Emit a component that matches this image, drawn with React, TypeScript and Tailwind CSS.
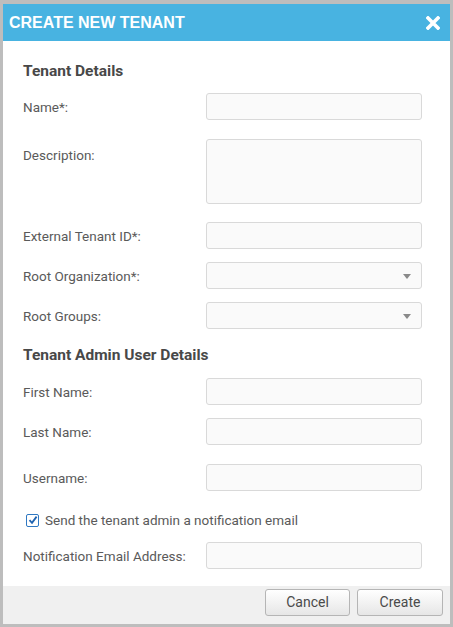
import React from 'react';

const font = { fontFamily: 'Roboto, "Liberation Sans", Arial, sans-serif' };

function Field({ label, className, tall, select }: { label: string; className: string; tall?: boolean; select?: boolean }) {
	return (
		<div className={`flex ${tall ? 'items-start' : 'items-center'} ${className}`}>
			<div className={`w-[183px] shrink-0 text-[13.5px] leading-[16px] text-[#5a5a5a] ${tall ? 'pt-[8px]' : ''}`}>{label}</div>
			<div
				className={`relative w-[216px] ${tall ? 'h-[65px]' : 'h-[27px]'} rounded-[3px] border border-[#d9d9d9] bg-[#fafafa]`}
			>
				{select && (
					<svg className="absolute right-[10px] top-[11px] w-[8px] h-[5px]" viewBox="0 0 8 5">
						<path d="M0 0h8L4 5z" fill="#8a8a8a" />
					</svg>
				)}
			</div>
		</div>
	);
}

export default function App() {
	return (
		<div className="w-[453px] h-[627px] bg-[#bdbdbd] pt-[4px] px-[3px] pb-[3px] flex flex-col" style={font}>
			{/* Header */}
			<div className="h-[37px] shrink-0 bg-[#48b3e1] flex items-center justify-between pl-[6px] pr-[10px]">
				<span className="text-white font-bold text-[16px] leading-none" style={{ fontFamily: '"Liberation Sans", Arial, sans-serif' }}>
					CREATE NEW TENANT
				</span>
				<svg className="w-[14px] h-[14px]" viewBox="0 0 14 14">
					<path d="M2 2L12 12M12 2L2 12" stroke="#fff" strokeWidth={3.6} strokeLinecap="square" />
				</svg>
			</div>

			{/* Body */}
			<div className="flex-1 bg-white flex flex-col">
				<div className="px-[20px] pt-[22px]">
					<h2 className="text-[15.5px] leading-[17px] font-bold text-[#484848]">Tenant Details</h2>
					<Field label="Name*:" className="mt-[13px]" />
					<Field label="Description:" className="mt-[19px]" tall />
					<Field label="External Tenant ID*:" className="mt-[18px]" />
					<Field label="Root Organization*:" className="mt-[13px]" select />
					<Field label="Root Groups:" className="mt-[13px]" select />

					<h2 className="mt-[18px] text-[15.5px] leading-[17px] font-bold text-[#484848]">Tenant Admin User Details</h2>
					<Field label="First Name:" className="mt-[14px]" />
					<Field label="Last Name:" className="mt-[13px]" />
					<Field label="Username:" className="mt-[19px]" />

					<label className="mt-[21px] flex items-center h-[16px] pl-[3px]">
						<span className="w-[13px] h-[13px] border border-[#2f78c2] bg-white rounded-[2px] flex items-center justify-center">
							<svg className="w-[10px] h-[10px]" viewBox="0 0 10 10">
								<path d="M1.5 5.2L4 7.8L8.6 1.6" fill="none" stroke="#1f63b0" strokeWidth={1.8} />
							</svg>
						</span>
						<span className="ml-[6px] text-[13.5px] leading-[16px] text-[#5a5a5a]">Send the tenant admin a notification email</span>
					</label>

					<Field label="Notification Email Address:" className="mt-[14px]" />
				</div>

				{/* Footer */}
				<div className="mt-auto h-[38px] bg-[#f0f0f0] flex justify-end items-start pt-[3px] pr-[7px] gap-[7px]">
					<button className="w-[85px] h-[27px] rounded-[3px] border border-[#b5b5b5] bg-gradient-to-b from-white to-[#e6e6e6] text-[14px] text-[#4a4a4a]">
						Cancel
					</button>
					<button className="w-[86px] h-[27px] rounded-[3px] border border-[#b5b5b5] bg-gradient-to-b from-white to-[#e6e6e6] text-[14px] text-[#4a4a4a]">
						Create
					</button>
				</div>
			</div>
		</div>
	);
}
